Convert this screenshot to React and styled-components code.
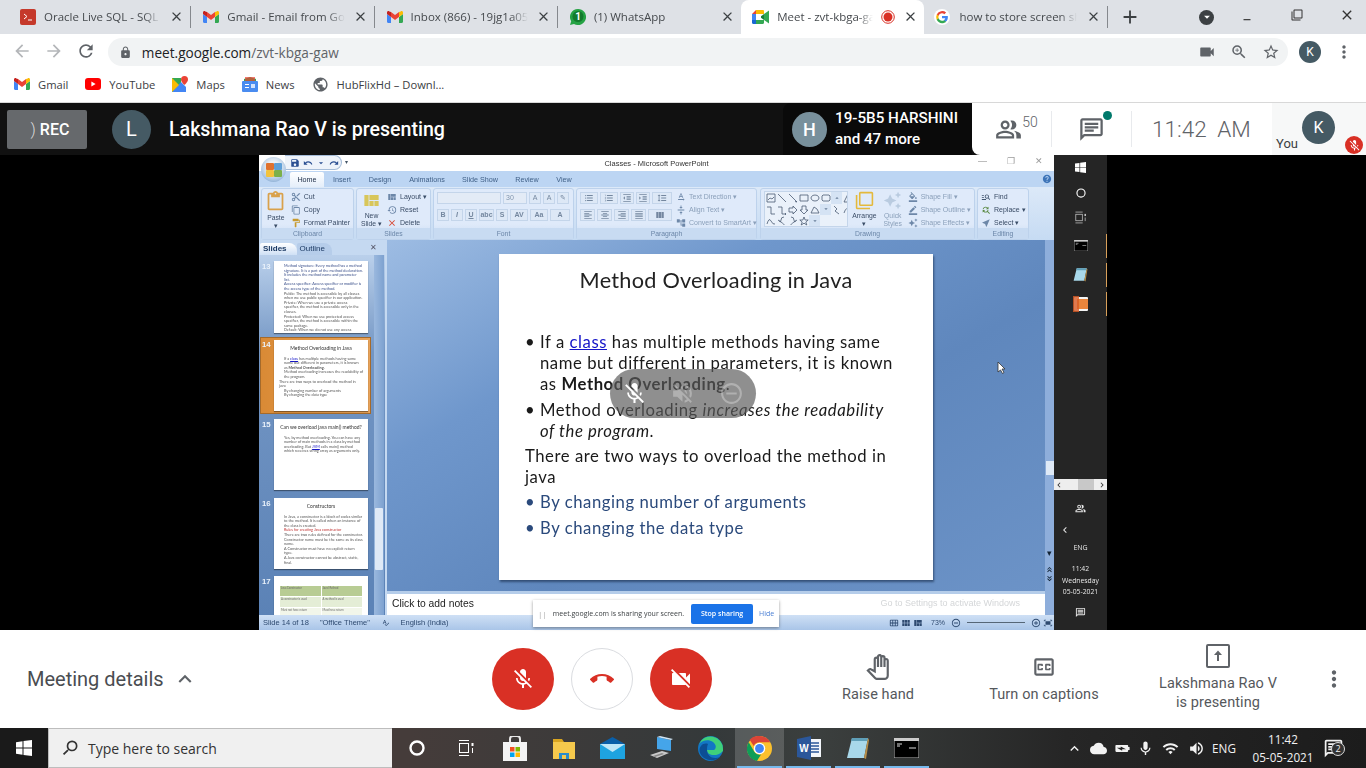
import React from 'react'
import styled, { createGlobalStyle } from 'styled-components'
import {
  MdArrowBack, MdArrowForward, MdRefresh, MdLock, MdVideocam, MdZoomIn, MdStarBorder, MdMoreVert,
  MdClose, MdAdd, MdExpandLess, MdMicOff, MdVideocamOff, MdCallEnd, MdOutlinePanTool,
  MdOutlineClosedCaption, MdOutlinePeopleAlt, MdOutlineChat, MdArrowDropDown, MdOutlineRemoveCircleOutline,
  MdVolumeOff, MdPublic, MdKeyboardArrowLeft, MdKeyboardArrowRight, MdKeyboardArrowUp, MdSearch,
  MdOutlineMessage, MdMic, MdOutlineWifi, MdVolumeUp, MdCloud, MdBatteryChargingFull, MdMinimize,
  MdFilterNone, MdContentCut, MdContentCopy, MdFormatPaint, MdContentPaste, MdViewQuilt, MdRestore,
  MdFormatListBulleted, MdFormatListNumbered, MdFormatIndentDecrease, MdFormatIndentIncrease,
  MdFormatLineSpacing, MdFormatAlignLeft, MdFormatAlignCenter, MdFormatAlignRight, MdFormatAlignJustify,
  MdViewColumn, MdTextRotationNone, MdVerticalAlignCenter, MdAccountTree, MdFormatColorFill, MdBorderColor,
  MdAutoAwesome, MdFindReplace, MdNearMe, MdHelp, MdSpellcheck, MdViewModule, MdCalendarViewMonth,
  MdFitScreen, MdAddCircleOutline, MdRemoveCircleOutline, MdKeyboardDoubleArrowUp, MdKeyboardDoubleArrowDown,
  MdArrowDropUp, MdSave, MdUndo, MdRedo, MdManageSearch,
} from 'react-icons/md'

const GlobalStyle = createGlobalStyle`
  html, body { margin: 0; padding: 0; background: #000; }
  * { box-sizing: border-box; }
  body { font-family: "Open Sans", sans-serif; }
`

const Page = styled.div`
  width: 1366px;
  height: 768px;
  overflow: hidden;
  display: flex;
  flex-direction: column;
  position: relative;
`

/* BROWSER CHROME */
const TabStrip = styled.div`
  height: 34px;
  background: #dee1e6;
  display: flex;
  align-items: stretch;
  padding-left: 8px;
  flex-shrink: 0;
`

const Tab = styled.div`
  width: 183.3px;
  display: flex;
  align-items: center;
  padding: 0 6px 1px ${(p) => p.$left || 12}px;
  gap: ${(p) => p.$gap || 8}px;
  position: relative;
  color: #45494d;
  font-size: 11.5px;
  background: ${(p) => (p.$active ? '#fff' : 'transparent')};
  border-radius: 8px 8px 0 0;
  border-right: ${(p) => (p.$divider ? '1px solid #9da0a5' : '0')};
  background-clip: padding-box;
  ${(p) => p.$divider && 'border-image: linear-gradient(#dee1e6 7px, #85888d 7px, #85888d 27px, #dee1e6 27px) 1;'}
`

const TabTitle = styled.span`
  flex: 1;
  overflow: hidden;
  white-space: nowrap;
  -webkit-mask-image: linear-gradient(90deg, #000 85%, transparent);
  mask-image: linear-gradient(90deg, #000 85%, transparent);
`

const TabClose = styled(MdClose)`
  font-size: 15px;
  color: #3c4043;
  flex-shrink: 0;
`

const NewTab = styled(MdAdd)`
  font-size: 22px;
  color: #3c4043;
  align-self: center;
  margin-left: 11px;
`

const WindowControls = styled.div`
  margin-left: auto;
  margin-right: -6px;
  display: flex;
  align-items: center;
  color: #333;
`

const ProfileDrop = styled.span`
  width: 15px;
  height: 15px;
  margin-right: 8px;
  border-radius: 50%;
  background: #3c4043;
  color: #fff;
  display: flex;
  align-items: center;
  justify-content: center;
  font-size: 14px;
`

const WindowButton = styled.span`
  width: 50px;
  height: 34px;
  display: flex;
  align-items: center;
  justify-content: center;
  font-size: ${(p) => p.$size || 14}px;
  margin-top: -5px;
`

const Toolbar = styled.div`
  height: 33px;
  background: #fff;
  display: flex;
  align-items: center;
  padding: 0 12px;
  flex-shrink: 0;
`

const NavIcon = styled.span`
  width: 32px;
  font-size: 20px;
  display: flex;
  justify-content: flex-start;
  color: ${(p) => (p.$off ? '#b4b6b9' : '#5f6368')};
`

const Omnibox = styled.div`
  width: 1182px;
  height: 28px;
  border-radius: 14px;
  background: #f1f3f4;
  display: flex;
  align-items: center;
  padding: 0 8px 0 11px;
  font-size: 13.6px;
  color: #202124;
  margin-top: 3px;
`

const LockIcon = styled(MdLock)`
  font-size: 13px;
  color: #5f6368;
  margin-right: 10px;
`

const UrlPath = styled.span`
  color: #5f6368;
`

const OmniIcons = styled.div`
  margin-left: auto;
  display: flex;
  gap: 14px;
  font-size: 18px;
  color: #5f6368;
`

const Avatar = styled.span`
  width: ${(p) => p.$size}px;
  height: ${(p) => p.$size}px;
  border-radius: 50%;
  background: ${(p) => p.$bg || '#455a64'};
  color: ${(p) => p.$color || '#fff'};
  font-size: ${(p) => p.$font}px;
  font-family: Roboto, sans-serif;
  display: flex;
  align-items: center;
  justify-content: center;
  flex-shrink: 0;
`

const ToolbarEnd = styled.div`
  display: flex;
  align-items: center;
  margin-left: 11px;
  gap: 13px;
  margin-top: 3px;
  color: #5f6368;
  font-size: 20px;
`

const Bookmarks = styled.div`
  height: 36px;
  background: #fff;
  border-bottom: 1px solid #d8d8d8;
  display: flex;
  align-items: center;
  padding: 0 0 1px 14px;
  font-size: 11.2px;
  color: #3c4043;
  flex-shrink: 0;
`

const Bookmark = styled.span`
  display: flex;
  align-items: center;
  gap: 8px;
  margin-right: 17px;
`

/* MEET TOP BAR */
const MeetBar = styled.div`
  height: 52px;
  background: #111;
  display: flex;
  align-items: center;
  font-family: Roboto, sans-serif;
  flex-shrink: 0;
  color: #fff;
`

const RecBadge = styled.div`
  width: 80px;
  height: 39px;
  margin-left: 7px;
  margin-right: 25px;
  border-radius: 2px;
  background: #66696c;
  display: flex;
  align-items: center;
  justify-content: center;
  gap: 4px;
  font-size: 16px;
  font-weight: 500;
  padding-left: 6px;
`

const RecMark = styled.span`
  font-weight: 300;
  color: #ddd;
`

const Presenter = styled.div`
  font-size: 19.6px;
  font-weight: 500;
  margin-left: 18px;
`

const Others = styled.div`
  margin-left: auto;
  width: 189px;
  height: 52px;
  border-radius: 8px 0 0 0;
  background: #0a0a0a;
  display: flex;
  align-items: center;
  gap: 8px;
  padding-left: 9px;
  font-size: 15.2px;
  font-weight: 500;
  line-height: 21px;
  white-space: nowrap;
`

const MeetInfo = styled.div`
  width: 394px;
  height: 52px;
  background: #fff;
  border-radius: 0 0 0 8px;
  display: flex;
  align-items: center;
  color: #5f6368;
`

const InfoIcon = styled.div`
  position: relative;
  height: 36px;
  display: flex;
  align-items: center;
  justify-content: center;
  width: ${(p) => p.$w}px;
  padding-left: ${(p) => p.$pl || 0}px;
  border-right: 1px solid #e8eaed;
  font-size: 27px;
`

const PeopleCount = styled.span`
  font-size: 14px;
  font-weight: 300;
  margin: -14px 0 0 0;
  color: #5f6368;
`

const ChatDot = styled.span`
  position: absolute;
  top: 0;
  right: 19px;
  width: 9px;
  height: 9px;
  border-radius: 50%;
  background: #00796b;
`

const Clock = styled.div`
  margin-left: 20px;
  width: 120px;
  font-size: 22.5px;
  font-weight: 300;
  word-spacing: 5px;
  color: #5f6368;
  white-space: nowrap;
`

const YouPanel = styled.div`
  flex: 1;
  height: 52px;
  background: #f7f8f8;
  position: relative;
  display: flex;
  align-items: center;
  padding-left: 30px;
  padding-bottom: 3px;
`

const YouLabel = styled.span`
  position: absolute;
  left: 4px;
  bottom: 4px;
  font-size: 13px;
  color: #3c4043;
`

const MutedBadge = styled.span`
  position: absolute;
  right: 3px;
  bottom: 1px;
  width: 18px;
  height: 18px;
  border-radius: 50%;
  background: #d93025;
  color: #fff;
  display: flex;
  align-items: center;
  justify-content: center;
  font-size: 13px;
`

/* SHARED SCREEN */
const Stage = styled.div`
  height: 475px;
  background: #000;
  display: flex;
  padding-left: 259px;
  flex-shrink: 0;
  position: relative;
`

const Ppt = styled.div`
  width: 795px;
  height: 475px;
  background: #c3d9f1;
  display: flex;
  flex-direction: column;
  font-family: "Liberation Sans", sans-serif;
  color: #36475f;
  filter: blur(0.4px);
`

const PptTitle = styled.div`
  height: 16px;
  background: #fff;
  display: flex;
  align-items: center;
  font-size: 7.5px;
  color: #333;
  position: relative;
  justify-content: center;
`

const Orb = styled.div`
  position: absolute;
  left: 2px;
  top: 2px;
  width: 25px;
  height: 25px;
  border-radius: 50%;
  background: radial-gradient(circle at 50% 40%, #eef2f6 30%, #a3c0e0 70%, #6288b4);
  display: grid;
  grid-template-columns: 8px 8px;
  grid-template-rows: 7px 7px;
  align-content: center;
  justify-content: center;
  z-index: 2;
`

const OrbCell = styled.span`
  background: ${(p) => p.$c};
  border-radius: 1px;
`

const Quick = styled.div`
  position: absolute;
  left: 26px;
  top: 0;
  height: 15px;
  width: 57px;
  border: 1px solid #a5bcd8;
  border-left: 0;
  border-radius: 0 8px 8px 0;
  background: #eef3fa;
  display: flex;
  align-items: center;
  gap: 3px;
  padding-left: 5px;
  font-size: 10px;
  color: #2a4f92;
`

const QuickMore = styled.span`
  position: absolute;
  left: 86px;
  top: 3px;
  font-size: 6px;
  color: #456;
`

const TitleControls = styled.div`
  position: absolute;
  right: 11px;
  top: 1px;
  display: flex;
  gap: 20px;
  font-size: 9px;
  color: #9a9a9a;
`

const PptTabs = styled.div`
  height: 16px;
  background: #bcd5f3;
  display: flex;
  align-items: flex-end;
  font-size: 7.2px;
  color: #3f5f86;
  padding-left: 31px;
  position: relative;
`

const HelpBadge = styled(MdHelp)`
  position: absolute;
  right: 2px;
  top: 3px;
  font-size: 10px;
  color: #3d74b8;
`

const PptTab = styled.span`
  height: 15px;
  display: flex;
  align-items: center;
  justify-content: center;
  width: ${(p) => p.$w}px;
  background: ${(p) => (p.$active ? 'linear-gradient(#fff, #e4eefa)' : 'transparent')};
  border-radius: 2px 2px 0 0;
  color: ${(p) => (p.$active ? '#20304a' : '#3f5f86')};
`

const Ribbon = styled.div`
  height: 53px;
  background: linear-gradient(#dce9f8, #c6dbf3);
  display: flex;
  padding: 1px 2px 0;
  gap: 2px;
`

const RibbonGroup = styled.div`
  width: ${(p) => p.$w}px;
  margin-left: ${(p) => p.$ml || 0}px;
  border: 1px solid #bdd2ec;
  border-radius: 3px;
  background: linear-gradient(#dfeafa 70%, #c8dbf3);
  display: flex;
  flex-direction: column;
  font-size: 7px;
  color: ${(p) => (p.$off ? '#8ba0ba' : '#3a4c66')};
`

const GroupBody = styled.div`
  flex: 1;
  display: flex;
  padding: 2px 3px 0;
  gap: ${(p) => p.$gap || 4}px;
  min-height: 0;
`

const GroupLabel = styled.div`
  height: 11px;
  font-size: 6.8px;
  color: #6b86a8;
  text-align: center;
  background: #c8dbf2;
  line-height: 12px;
`

const BigTool = styled.div`
  width: ${(p) => p.$w || 28}px;
  display: flex;
  flex-direction: column;
  align-items: center;
  text-align: center;
  line-height: 8px;
  gap: 2px;
  font-size: 6.8px;
  color: ${(p) => (p.$off ? '#8ba0ba' : 'inherit')};
`

const BigGlyph = styled.span`
  display: flex;
  font-size: ${(p) => p.$size || 20}px;
  color: ${(p) => p.$c};
  height: ${(p) => p.$size || 20}px;
`

const ToolStack = styled.div`
  display: flex;
  flex-direction: column;
  justify-content: space-between;
  height: 38px;
  white-space: nowrap;
  padding-bottom: 1px;
  color: ${(p) => (p.$off ? '#8ba0ba' : 'inherit')};
`

const ToolLine = styled.span`
  display: flex;
  align-items: center;
  gap: 3px;
  height: 11px;
`

const ToolGlyph = styled.span`
  display: flex;
  font-size: 10px;
  width: 10px;
  color: ${(p) => p.$c || '#6d87a8'};
`

const FontRow = styled.div`
  display: flex;
  align-items: center;
  gap: 2px;
  height: 13px;
  margin-bottom: 4px;
  font-size: 7px;
  color: #8195ae;
  font-weight: ${(p) => (p.$bold ? 700 : 400)};
`

const FontField = styled.span`
  width: ${(p) => p.$w}px;
  height: 12px;
  background: #e3ebf6;
  border: 1px solid #c4d5ea;
  font-size: 7px;
  padding-left: 2px;
  line-height: 10px;
  color: #8195ae;
`

const SmallBtn = styled.span`
  width: ${(p) => p.$w || 12}px;
  height: 12px;
  border: 1px solid #c4d5ea;
  display: flex;
  align-items: center;
  justify-content: center;
  font-size: ${(p) => p.$font || 7}px;
  color: #74879f;
  background: #dde8f6;
`

const Column = styled.div`
  display: flex;
  flex-direction: column;
  width: ${(p) => p.$w}px;
  flex-shrink: 0;
`

const ShapeGrid = styled.div`
  width: 84px;
  height: 36px;
  display: grid;
  grid-template-columns: repeat(7, 11px) 7px;
  grid-auto-rows: 11.6px;
  background: #eaf1fa;
  border: 1px solid #c4d5ea;
  overflow: hidden;
  flex-shrink: 0;
`

const ShapeSvg = styled.svg`
  width: 10px;
  height: 10px;
  margin: 1px 0 0 1px;
  fill: none;
  stroke: #4a5b72;
  stroke-width: 0.8;
`

const ShapeScroll = styled.span`
  display: flex;
  font-size: 8px;
  justify-content: center;
  align-items: center;
  background: #d5e3f4;
  color: #667c98;
`

const PptBody = styled.div`
  flex: 1;
  display: flex;
  min-height: 0;
`

const SlidesPane = styled.div`
  width: 126px;
  background: linear-gradient(#c5d9f1, #7396c4 30%, #5b82b6);
  display: flex;
  flex-direction: column;
  position: relative;
  overflow: hidden;
`

const PaneTabs = styled.div`
  height: 15px;
  padding: 3px 0 0 1px;
  display: flex;
  align-items: flex-end;
  font-size: 8px;
  color: #1c3a63;
  flex-shrink: 0;
  background: #c5d9f1;
  position: relative;
`

const PaneTab = styled.span`
  height: 12px;
  padding: 0 ${(p) => (p.$active ? '10px' : '7px')} 0 3px;
  line-height: 12px;
  font-weight: ${(p) => (p.$active ? 700 : 400)};
  background: ${(p) => (p.$active ? 'linear-gradient(#fff, #cfe0f5)' : '#b6cdea')};
  border-radius: 2px 8px 0 0;
`

const PaneClose = styled.span`
  position: absolute;
  right: 8px;
  top: 3px;
  font-size: 8px;
  color: #556;
`

const PaneBody = styled.div`
  flex: 1;
  display: flex;
  min-height: 0;
`

const ThumbList = styled.div`
  width: 113px;
  display: flex;
  flex-direction: column;
  padding-top: 6px;
  min-height: 0;
`

const ThumbRow = styled.div`
  height: ${(p) => p.$h}px;
  flex-shrink: 0;
  margin-top: ${(p) => p.$gap || 0}px;
  margin-left: 2px;
  width: 109px;
  padding: ${(p) => (p.$sel ? '2px 2px 2px 13px' : '0 2px 0 13px')};
  display: flex;
  background: ${(p) => (p.$sel ? 'linear-gradient(90deg, #d98a35, #e8a35a)' : 'transparent')};
  outline: ${(p) => (p.$sel ? '1px solid #a56a2a' : 'none')};
  position: relative;
`

const ThumbNum = styled.span`
  position: absolute;
  left: 1px;
  top: ${(p) => (p.$sel ? 2 : 1)}px;
  font-size: 7.8px;
  font-weight: 700;
  color: #e9f1fa;
`

const ThumbCard = styled.div`
  width: 94px;
  background: #fff;
  padding: 3px 5px;
  font-family: Lato, sans-serif;
  font-size: 3.8px;
  line-height: 4.6px;
  color: #555;
  overflow: hidden;
  box-shadow: 0 1px 1px rgba(0, 0, 0, 0.4);
  flex-shrink: 0;
  height: ${(p) => p.$h}px;
`

const ThumbHead = styled.div`
  text-align: center;
  font-size: 5px;
  color: #333;
  margin: 3px 0 6px;
`

const ThumbLine = styled.div`
  padding-left: 5px;
  color: ${(p) => p.$c || '#555'};
`

const ThumbTable = styled.div`
  display: grid;
  grid-template-columns: 1fr 1fr;
  gap: 1px;
  margin: 7px 1px 0;
  font-size: 2.8px;
  line-height: 4px;
`

const ThumbCell = styled.div`
  min-height: 10px;
  background: ${(p) => p.$c};
  color: #666;
  padding: 0 1px;
`

const PaneRail = styled.div`
  width: 10px;
  margin-left: 2px;
  background: linear-gradient(90deg, #9ab8de, #7ea2d0);
  flex-shrink: 0;
  position: relative;
`

const RailThumb = styled.span`
  position: absolute;
  top: 253px;
  left: 1px;
  width: 8px;
  height: 62px;
  background: #dfe9f6;
  border-radius: 1px;
`

const MainArea = styled.div`
  flex: 1;
  display: flex;
  flex-direction: column;
  min-width: 0;
  border-left: 2px solid #c5d9f1;
`

const SlideArea = styled.div`
  flex: 1;
  display: flex;
  justify-content: center;
  padding-top: 14px;
  background: linear-gradient(150deg, #9dbce3 0%, #6f97cc 30%, #5f87bd 60%, #6c93c7 100%);
`

const Slide = styled.div`
  width: 434px;
  height: 326px;
  background: #fff;
  box-shadow: 1px 2px 2px rgba(20, 40, 70, 0.6);
  font-family: Lato, sans-serif;
  color: #1a1a1a;
  padding: 0 32px 0 26px;
  font-size: 16.7px;
  line-height: 21.2px;
  letter-spacing: 0.55px;
`

const SlideTitle = styled.h1`
  margin: 12px -6px 38px 0;
  font-size: 21.7px;
  line-height: 28px;
  font-weight: 400;
  text-align: center;
  letter-spacing: 0.25px;
  color: #222;
`

const Bullet = styled.div`
  display: flex;
  margin-bottom: 4px;
  color: ${(p) => p.$c || 'inherit'};
`

const Dot = styled.span`
  width: 15px;
  flex-shrink: 0;
`

const Para = styled.div`
  margin-bottom: 4px;
`

const SlideLink = styled.span`
  color: #1414c8;
  text-decoration: underline;
`

const Notes = styled.div`
  height: 24px;
  background: #fff;
  border-top: 3px solid #b5cdea;
  font-size: 10.3px;
  line-height: 19px;
  color: #222;
  padding: 0 25px 0 5px;
  display: flex;
  justify-content: space-between;
`

const Ghost = styled.span`
  color: #d4d6d8;
  font-size: 9px;
`

const VScroll = styled.div`
  width: 9px;
  background: #8eaedb;
  display: flex;
  flex-direction: column;
  justify-content: flex-end;
  align-items: center;
  font-size: 9px;
  color: #123;
  padding-bottom: 32px;
  position: relative;
`

const ScrollThumb = styled.span`
  position: absolute;
  width: 8px;
  height: 14px;
  top: 221px;
  background: #dfeaf7;
`

const ScrollGlyph = styled.span`
  display: flex;
  margin-bottom: ${(p) => p.$mb || 0}px;
`

const PptStatus = styled.div`
  height: 15px;
  background: linear-gradient(#cfe0f5, #a9c5e8);
  display: flex;
  align-items: center;
  font-size: 7.5px;
  color: #2e4a70;
  padding-left: 4px;
`

const StatusText = styled.span`
  margin-right: ${(p) => p.$mr}px;
  display: flex;
  align-items: center;
`

const StatusEnd = styled.div`
  margin-left: auto;
  display: flex;
  align-items: center;
  gap: 2px;
  padding-right: 1px;
  font-size: 10px;
`

const StatusZoom = styled.span`
  font-size: 7px;
  margin: 0 4px 0 6px;
`

const ZoomTrack = styled.span`
  width: 58px;
  height: 1px;
  background: #567;
  display: block;
  margin: 0 4px;
`

const ShareBar = styled.div`
  position: absolute;
  left: 533px;
  top: 445px;
  width: 246px;
  height: 27px;
  background: #fff;
  box-shadow: 0 1px 3px rgba(0, 0, 0, 0.4);
  display: flex;
  align-items: center;
  padding-left: 5px;
  font-family: "Open Sans", sans-serif;
  font-size: 7px;
  white-space: nowrap;
  color: #3c4043;
  z-index: 4;
  filter: blur(0.25px);
`

const ShareGrip = styled.span`
  color: #aaa;
  margin-right: 6px;
  font-size: 8px;
`

const StopButton = styled.span`
  width: 62px;
  height: 20px;
  margin-left: 7px;
  border-radius: 2px;
  background: #1a73e8;
  color: #fff;
  font-weight: 600;
  display: flex;
  align-items: center;
  justify-content: center;
`

const HideLink = styled.span`
  margin-left: 6px;
  color: #4a7fd4;
`

const Pill = styled.div`
  position: absolute;
  left: 610px;
  top: 214px;
  width: 146px;
  height: 49px;
  border-radius: 25px;
  background: rgba(90, 90, 90, 0.68);
  display: flex;
  align-items: center;
  justify-content: space-around;
  font-size: 25px;
  z-index: 3;
`

const PillIcon = styled.span`
  display: flex;
  color: ${(p) => (p.$dim ? 'rgba(255,255,255,0.3)' : '#fff')};
`

const Pointer = styled.svg`
  position: absolute;
  left: 997px;
  top: 206px;
  z-index: 3;
`

const Sidebar = styled.div`
  width: 53px;
  background: #252525;
  display: flex;
  flex-direction: column;
  align-items: center;
  color: #e8e8e8;
  font-family: "Open Sans", sans-serif;
  font-size: 7px;
  position: relative;
  filter: blur(0.3px);
`

const SideIcon = styled.div`
  height: 25px;
  display: flex;
  align-items: center;
  justify-content: center;
  flex-shrink: 0;
  margin-top: ${(p) => p.$mt || 0}px;
  margin-bottom: ${(p) => p.$mb || 0}px;
`

const OpenTick = styled.span`
  position: absolute;
  right: 0;
  top: ${(p) => p.$top}px;
  width: 1px;
  height: 24px;
  background: #d9a05a;
`

const SideScroll = styled.div`
  margin-top: 163px;
  width: 53px;
  height: 11px;
  background: #eee;
  display: flex;
  justify-content: space-between;
  align-items: center;
  color: #333;
  font-size: 10px;
  flex-shrink: 0;
`

const SideScrollThumb = styled.span`
  width: 16px;
  height: 11px;
  background: #c8c8c8;
  margin-left: 11px;
`

const SideBack = styled.div`
  align-self: flex-start;
  margin: 3px 0 3px 5px;
  font-size: 12px;
  display: flex;
`

const SideEng = styled.div`
  margin-top: 4px;
`

const SideClock = styled.div`
  text-align: center;
  line-height: 11.5px;
  font-size: 6.8px;
  margin-top: 11px;
`

/* MEET FOOTER */
const Footer = styled.div`
  height: 98px;
  background: #fff;
  display: flex;
  align-items: center;
  font-family: Roboto, sans-serif;
  color: #3c4043;
  flex-shrink: 0;
  position: relative;
`

const Details = styled.div`
  width: 492px;
  padding-left: 27px;
  display: flex;
  align-items: center;
  gap: 8px;
  font-size: 20px;
  color: #4a4d51;
`

const CallButtons = styled.div`
  display: flex;
  gap: 17px;
  padding-bottom: 1px;
`

const CallButton = styled.span`
  width: 62px;
  height: 62px;
  border-radius: 50%;
  background: ${(p) => (p.$light ? '#fff' : '#d93025')};
  border: ${(p) => (p.$light ? '1px solid #dadce0' : '0')};
  color: ${(p) => (p.$light ? '#d93025' : '#fff')};
  font-size: 24px;
  display: flex;
  align-items: center;
  justify-content: center;
`

const FooterAction = styled.div`
  width: ${(p) => p.$w}px;
  margin-left: ${(p) => p.$ml}px;
  display: flex;
  flex-direction: column;
  align-items: center;
  font-size: 14.5px;
  line-height: 19px;
  text-align: center;
  color: #55585c;
  letter-spacing: 0.1px;
  padding-bottom: ${(p) => p.$pb || 0}px;
  white-space: nowrap;
`

const FooterGlyph = styled.span`
  font-size: 26px;
  height: 30px;
  margin: -3px 0 3px;
  display: flex;
  align-items: center;
  color: #5f6368;
`

const FooterMore = styled.span`
  font-size: 26px;
  display: flex;
  color: #5f6368;
  margin-left: 38px;
`

/* WINDOWS TASKBAR */
const Taskbar = styled.div`
  height: 40px;
  background: linear-gradient(90deg, #453c3a 30%, #34393a 52%, #3b3f3e 60%, #262626 78%, #1c1c1c);
  display: flex;
  align-items: stretch;
  color: #fff;
  flex-shrink: 0;
  font-family: "Open Sans", sans-serif;
`

const StartButton = styled.div`
  width: 48px;
  background: #1a1a1a;
  display: flex;
  align-items: center;
  justify-content: center;
`

const SearchBox = styled.div`
  width: 344px;
  background: #f0f0f0;
  border: 1px solid #bdbdbd;
  border-width: 1px 0 1px 1px;
  display: flex;
  align-items: center;
  gap: 8px;
  padding-left: 11px;
  color: #333;
  font-size: 14px;
`

const SearchGlyph = styled(MdSearch)`
  font-size: 20px;
  transform: scaleX(-1);
`

const TaskIcon = styled.div`
  width: 49px;
  display: flex;
  align-items: center;
  justify-content: center;
  position: relative;
  background: ${(p) => (p.$active ? 'rgba(255, 255, 255, 0.17)' : 'transparent')};
  &::after {
    content: '';
    position: absolute;
    left: 2px;
    right: 2px;
    bottom: 0;
    height: 2px;
    background: ${(p) => (p.$open ? '#76b9ed' : 'transparent')};
  }
`

const Tray = styled.div`
  margin-left: auto;
  display: flex;
  align-items: center;
  font-size: 17px;
  color: #f2f2f2;
`

const TraySlot = styled.span`
  display: flex;
  width: ${(p) => p.$w || 24}px;
  justify-content: center;
  font-size: ${(p) => p.$font || 17}px;
`

const BatteryGlyph = styled(MdBatteryChargingFull)`
  transform: rotate(90deg);
`

const TrayClock = styled.div`
  width: 70px;
  text-align: center;
  font-size: 11.7px;
  line-height: 18px;
  margin-left: 8px;
`

const NotifySlot = styled.div`
  width: 48px;
  padding-right: 18px;
  display: flex;
  align-items: center;
  justify-content: center;
  position: relative;
  font-size: 21px;
`

const NotifyCount = styled.span`
  position: absolute;
  right: 21px;
  bottom: 3px;
  width: 14px;
  height: 14px;
  border-radius: 50%;
  background: #333;
  border: 1px solid #ddd;
  font-size: 9px;
  line-height: 12px;
  text-align: center;
`

/* ICONS */
const GmailIcon = () => (
  <svg width="16" height="12" viewBox="0 0 16 12">
    <path d="M1 12V2l7 5 7-5v10h-3V6L8 9 4 6v6z" fill="#fff" />
    <path d="M0 3v7.800C0 11.500.5 12 1.200 12H4V6z" fill="#4285f4" />
    <path d="M12 12h2.800c.7 0 1.200-.5 1.200-1.200V3l-4 3z" fill="#34a853" />
    <path d="M12 1v5l4-3V1.600C16 .3 14.600-.3 13.700.4z" fill="#fbbc04" />
    <path d="M4 6V1l4 3 4-3v5L8 9z" fill="#ea4335" />
    <path d="M0 1.600V3l4 3V1L2.300.4C1.400-.3 0 .3 0 1.600z" fill="#c5221f" />
  </svg>
)

const OracleIcon = () => (
  <svg width="16" height="16" viewBox="0 0 16 16">
    <rect width="16" height="16" rx="2" fill="#c5392b" />
    <path d="M4 5l3 2.500L4 10" fill="none" stroke="#fff" />
    <path d="M8 11h4" stroke="#fff" />
  </svg>
)

const WhatsAppIcon = () => (
  <svg width="16" height="16" viewBox="0 0 16 16">
    <path d="M8 0a8 8 0 0 0-6.800 12.200L0 16l4-1.100A8 8 0 1 0 8 0z" fill="#25a244" />
    <circle cx="8" cy="7.500" r="5.500" fill="#137a2d" />
    <text x="8" y="11" textAnchor="middle" fontSize="10" fontWeight="700" fill="#fff" fontFamily="Roboto">1</text>
  </svg>
)

const MeetIcon = () => (
  <svg width="17" height="14" viewBox="0 0 17 14">
    <path d="M0 4l4-4v4z" fill="#ea4335" />
    <path d="M0 4h4v6H0z" fill="#4285f4" />
    <path d="M0 10h4v4H1.200C.5 14 0 13.500 0 12.800z" fill="#1967d2" />
    <path d="M4 0h6.800c.7 0 1.200.5 1.200 1.200V4H4z" fill="#fbbc04" />
    <path d="M4 10h8v2.800c0 .7-.5 1.200-1.200 1.200H4z" fill="#34a853" />
    <path d="M8 7l4-3v6z" fill="#188038" />
    <path d="M12 4l5-3.500v13L12 10z" fill="#34a853" />
    <rect x="4" y="4" width="5" height="6" fill="#fff" />
  </svg>
)

const GoogleIcon = () => (
  <svg width="16" height="16" viewBox="0 0 18 18">
    <circle cx="9" cy="9" r="9" fill="#fff" />
    <path d="M15.600 9.200c0-.5 0-.9-.1-1.300H9v2.500h3.700a3.200 3.200 0 0 1-1.400 2.100v1.700h2.300c1.300-1.200 2-3 2-5z" fill="#4285f4" />
    <path d="M9 16c1.900 0 3.400-.6 4.600-1.700l-2.300-1.700c-.6.400-1.400.7-2.300.7-1.800 0-3.300-1.200-3.800-2.800H3.200v1.800A7 7 0 0 0 9 16z" fill="#34a853" />
    <path d="M5.200 10.500a4.200 4.200 0 0 1 0-2.900V5.800H3.200a7 7 0 0 0 0 6.400z" fill="#fbbc05" />
    <path d="M9 4.800c1 0 1.900.4 2.600 1l2-2A7 7 0 0 0 3.200 5.800l2 1.800C5.700 6 7.200 4.800 9 4.800z" fill="#ea4335" />
  </svg>
)

const RecDot = () => (
  <svg width="14" height="14" viewBox="0 0 14 14">
    <circle cx="7" cy="7" r="6.300" fill="none" stroke="#d93025" />
    <circle cx="7" cy="7" r="4.500" fill="#d93025" />
  </svg>
)

const YouTubeIcon = () => (
  <svg width="16" height="12" viewBox="0 0 16 12">
    <rect width="16" height="12" rx="3" fill="#f00" />
    <path d="M6.400 3.400l4.200 2.600-4.200 2.600z" fill="#fff" />
  </svg>
)

const MapsIcon = () => (
  <svg width="16" height="16" viewBox="0 0 16 16">
    <path d="M0 2h9v14H0z" fill="#34a853" />
    <path d="M0 16L9 6l5 5v5z" fill="#4285f4" />
    <path d="M0 2l7 7-7 7z" fill="#fbbc04" />
    <path d="M12.500 0a3.500 3.500 0 0 0-3.500 3.500C9 6 12.500 9 12.500 9S16 6 16 3.500A3.500 3.500 0 0 0 12.500 0z" fill="#ea4335" />
  </svg>
)

const NewsIcon = () => (
  <svg width="16" height="15" viewBox="0 0 16 15">
    <path d="M2 2l6-2 6 2v3H2z" fill="#34a853" />
    <path d="M3 0h10v4H3z" fill="#ea4335" opacity="0.7" />
    <rect x="0" y="4" width="16" height="11" rx="1" fill="#4a8cf0" />
    <rect x="3" y="7" width="4" height="1" fill="#fff" />
    <rect x="3" y="10" width="4" height="1" fill="#fff" />
    <rect x="9" y="7" width="4" height="4" fill="#d3e3fd" />
  </svg>
)

const WindowsLogo = ({ size = 16, color = '#fff' }) => (
  <svg width={size} height={size} viewBox="0 0 16 16" fill={color}>
    <path d="M0 2.200L6.500 1.300v6.200H0zM7.500 1.100L16 0v7.500H7.500zM0 8.500h6.500v6.200L0 13.800zM7.500 8.500H16V16l-8.500-1.100z" />
  </svg>
)

const TaskViewIcon = ({ size = 18, color = '#fff' }) => (
  <svg width={size} height={size} viewBox="0 0 18 18" fill="none" stroke={color}>
    <path d="M2 1.500h10M2 16.500h10" />
    <rect x="2.500" y="4.500" width="9" height="9" />
    <rect x="14.500" y="4" width="2" height="3" fill={color} stroke="none" />
    <path d="M15.500 9v5" />
  </svg>
)

const CortanaRing = ({ size = 16, width = 2.4 }) => (
  <svg width={size} height={size} viewBox="0 0 16 16">
    <circle cx="8" cy="8" r="6.500" fill="none" stroke="#fff" strokeWidth={width} />
  </svg>
)

const StoreIcon = () => (
  <svg width="24" height="25" viewBox="0 0 24 25">
    <path d="M7 7V3a3 3 0 0 1 3-3h4a3 3 0 0 1 3 3v4" fill="none" stroke="#e8e8e8" strokeWidth="2" />
    <rect y="6" width="24" height="19" fill="#f4f4f4" />
    <rect x="7" y="11" width="4.500" height="4.500" fill="#f25022" />
    <rect x="12.500" y="11" width="4.500" height="4.500" fill="#7fba00" />
    <rect x="7" y="16.500" width="4.500" height="4.500" fill="#00a4ef" />
    <rect x="12.500" y="16.500" width="4.500" height="4.500" fill="#ffb900" />
  </svg>
)

const FolderIcon = () => (
  <svg width="22" height="22" viewBox="0 0 22 22">
    <path d="M0 2h9l2 3h11v17H0z" fill="#d9a520" />
    <rect y="5" width="22" height="17" fill="#f5c94c" />
    <path d="M6 22v-6h10v6z" fill="#2a8ccb" />
    <rect x="9" y="18" width="4" height="4" fill="#f5c94c" />
  </svg>
)

const MailIcon = () => (
  <svg width="25" height="22" viewBox="0 0 25 22">
    <path d="M0 7l12.500-7L25 7z" fill="#0a5fa8" />
    <rect y="7" width="25" height="15" fill="#1ea3e0" />
    <path d="M0 7l12.500 8L25 7z" fill="#bfe6f7" />
  </svg>
)

const PcIcon = () => (
  <svg width="24" height="24" viewBox="0 0 24 24">
    <path d="M7 1l14 3v11L7 13z" fill="#45a5ea" />
    <path d="M7 1l3-1 13 3-2 1z" fill="#cfe6f7" />
    <path d="M0 19l12-4 7 2-12 5z" fill="#c9c9c9" />
    <path d="M3 20l9-3 2 1-9 3z" fill="#888" />
  </svg>
)

const EdgeIcon = () => (
  <svg width="25" height="25" viewBox="0 0 25 25">
    <circle cx="12.500" cy="12.500" r="12.500" fill="#1277c4" />
    <path d="M25 13A12.500 12.500 0 0 0 1 8c3-4 10-5 14-2s3 7 1 8H9c0 5 9 8 16 1z" fill="#3fd07a" />
    <path d="M9 14c0 6 6 10 13 7-7 6-17 3-20-4-2-6 3-11 8-9-1 2-1 4-1 6z" fill="#0c4e94" />
  </svg>
)

const ChromeIcon = () => (
  <svg width="25" height="25" viewBox="0 0 48 48">
    <circle cx="24" cy="24" r="24" fill="#fbc02d" />
    <path d="M24 0a24 24 0 0 1 20.800 12H24a12 12 0 0 0-11 7L5 7A24 24 0 0 1 24 0z" fill="#db4437" />
    <path d="M3.300 12L14 30a12 12 0 0 0 13 5.500L19 48A24 24 0 0 1 3.300 12z" fill="#0f9d58" />
    <circle cx="24" cy="24" r="11" fill="#fff" />
    <circle cx="24" cy="24" r="8.500" fill="#4285f4" />
  </svg>
)

const WordIcon = () => (
  <svg width="24" height="24" viewBox="0 0 24 24">
    <rect x="9" y="3" width="15" height="18" fill="#f3f6fb" />
    <path d="M13 7h9M13 10h9M13 13h9M13 16h9" stroke="#2b579a" strokeWidth="1.500" />
    <path d="M0 3l14-3v24L0 21z" fill="#2b579a" />
    <text x="7" y="16" textAnchor="middle" fontSize="10" fontWeight="700" fill="#fff" fontFamily="Liberation Sans">W</text>
  </svg>
)

const NotepadIcon = ({ size = 24 }) => (
  <svg width={size} height={size} viewBox="0 0 24 24">
    <path d="M6 2h16l-4 20H1z" fill="#a8d8ea" />
    <path d="M6 2h16l-.5 3H5z" fill="#5f9fb8" />
    <path d="M18 22l4-20 1 2-3 19z" fill="#b88f4a" />
  </svg>
)

const CmdIcon = ({ w = 25, h = 20 }) => (
  <svg width={w} height={h} viewBox="0 0 25 20">
    <rect width="25" height="20" fill="#000" stroke="#bbb" />
    <rect width="25" height="3" fill="#ccc" />
    <path d="M3 6h5M3 8h3M15 10h7" stroke="#ddd" />
  </svg>
)

const PptIcon = () => (
  <svg width="15" height="16" viewBox="0 0 15 16">
    <rect x="1" y="1" width="14" height="14" fill="#f4f4f4" rx="1" />
    <rect x="4" y="3" width="11" height="10" fill="#e9853c" />
    <rect x="0" y="0" width="6" height="16" fill="#d95b26" opacity="0.8" />
  </svg>
)

const PresentIcon = () => (
  <svg width="26" height="26" viewBox="0 0 26 26" fill="none" stroke="#5f6368" strokeWidth="2">
    <rect x="2" y="2" width="22" height="22" rx="1" />
    <path d="M13 18v-6" />
    <path d="M9 12l4-4.500 4 4.500z" fill="#5f6368" stroke="none" />
  </svg>
)

const ShapePaths = [
  'M1 1h8v8H1zM2 7l2-2 2 1 2-2', 'M1 1l8 8', 'M1 1l8 8M9 9l-2-.5', 'M1 2h8v6H1z', 'M5 2a4 3 0 1 0 .01 0', 'M2 2h6l1 1v4l-1 1H2L1 7V3z', null,
  'M5 1l4 8H1z', 'M1 2h4v7h4', 'M1 2h4v7h4M8 8l1 1-1 1', 'M1 3h4V1l4 4-4 4V7H1z', 'M3 1h4v4h2L5 9 1 5h2z', 'M1 8l3-6 3 2 2 4z', null,
  'M2 1l3 3-2 2 4 3', 'M1 8Q3 1 9 3', 'M1 8q2-7 4-3t4 3', 'M7 1Q4 1 4 4T2 5t2 1 3 3', 'M3 1q3 0 3 3t2 1-2 1-3 3', 'M5 1l1.200 3h3L6.800 6l1 3L5 7.200 2.200 9l1-3L.8 4h3z', null,
]

const ShapeIcon = ({ d }) => (
  <ShapeSvg viewBox="0 0 10 10"><path d={d} /></ShapeSvg>
)

const Thumb = ({ num, h, gap, sel, cardH, children }) => (
  <ThumbRow $h={h} $gap={gap} $sel={sel}>
    <ThumbNum $sel={sel}>{num}</ThumbNum>
    <ThumbCard $h={cardH}>{children}</ThumbCard>
  </ThumbRow>
)

export default function App() {
  return (
    <Page>
      <GlobalStyle />

      <TabStrip>
        <Tab $divider><OracleIcon /><TabTitle>Oracle Live SQL - SQL Worksheet</TabTitle><TabClose /></Tab>
        <Tab $divider><GmailIcon /><TabTitle>Gmail - Email from Google</TabTitle><TabClose /></Tab>
        <Tab $divider><GmailIcon /><TabTitle>Inbox (866) - 19jg1a05</TabTitle><TabClose /></Tab>
        <Tab><WhatsAppIcon /><TabTitle>(1) WhatsApp</TabTitle><TabClose /></Tab>
        <Tab $active $left={11}><MeetIcon /><TabTitle>Meet - zvt-kbga-gaw</TabTitle><RecDot /><TabClose /></Tab>
        <Tab $divider $left={10} $gap={9}><GoogleIcon /><TabTitle>how to store screen shots</TabTitle><TabClose /></Tab>
        <NewTab />
        <WindowControls>
          <ProfileDrop><MdArrowDropDown /></ProfileDrop>
          <WindowButton><MdMinimize /></WindowButton>
          <WindowButton $size={12}><MdFilterNone /></WindowButton>
          <WindowButton $size={16}><MdClose /></WindowButton>
        </WindowControls>
      </TabStrip>

      <Toolbar>
        <NavIcon $off><MdArrowBack /></NavIcon>
        <NavIcon $off><MdArrowForward /></NavIcon>
        <NavIcon><MdRefresh /></NavIcon>
        <Omnibox>
          <LockIcon />
          meet.google.com<UrlPath>/zvt-kbga-gaw</UrlPath>
          <OmniIcons><MdVideocam /><MdZoomIn /><MdStarBorder /></OmniIcons>
        </Omnibox>
        <ToolbarEnd>
          <Avatar $size={22} $font={12}>K</Avatar>
          <MdMoreVert />
        </ToolbarEnd>
      </Toolbar>

      <Bookmarks>
        <Bookmark><GmailIcon />Gmail</Bookmark>
        <Bookmark><YouTubeIcon />YouTube</Bookmark>
        <Bookmark><MapsIcon />Maps</Bookmark>
        <Bookmark><NewsIcon />News</Bookmark>
        <Bookmark><MdPublic size={17} color="#5f6368" />HubFlixHd – Downl...</Bookmark>
      </Bookmarks>

      <MeetBar>
        <RecBadge><RecMark>)</RecMark> REC</RecBadge>
        <Avatar $size={39} $font={20}>L</Avatar>
        <Presenter>Lakshmana Rao V is presenting</Presenter>
        <Others>
          <Avatar $size={35} $font={18} $bg="#78909c">H</Avatar>
          <div>19-5B5 HARSHINI<br />and 47 more</div>
        </Others>
        <MeetInfo>
          <InfoIcon $w={80} $pl={10}>
            <MdOutlinePeopleAlt />
            <PeopleCount>50</PeopleCount>
          </InfoIcon>
          <InfoIcon $w={80}>
            <MdOutlineChat />
            <ChatDot />
          </InfoIcon>
          <Clock>11:42 AM</Clock>
          <YouPanel>
            <Avatar $size={33} $font={16}>K</Avatar>
            <YouLabel>You</YouLabel>
            <MutedBadge><MdMicOff /></MutedBadge>
          </YouPanel>
        </MeetInfo>
      </MeetBar>

      <Stage>
        <Ppt>
          <PptTitle>
            <Orb>
              <OrbCell $c="#e0722f" /><OrbCell $c="#5fa0d8" /><OrbCell $c="#f2c33c" /><OrbCell $c="#7bb04a" />
            </Orb>
            <Quick><MdSave /><MdUndo /><MdArrowDropDown /><MdRedo /></Quick>
            <QuickMore>▾</QuickMore>
            Classes - Microsoft PowerPoint
            <TitleControls><span>—</span><span>❐</span><span>✕</span></TitleControls>
          </PptTitle>
          <PptTabs>
            <PptTab $w={34} $active>Home</PptTab>
            <PptTab $w={36}>Insert</PptTab>
            <PptTab $w={40}>Design</PptTab>
            <PptTab $w={54}>Animations</PptTab>
            <PptTab $w={52}>Slide Show</PptTab>
            <PptTab $w={42}>Review</PptTab>
            <PptTab $w={32}>View</PptTab>
            <HelpBadge />
          </PptTabs>
          <Ribbon>
            <RibbonGroup $w={93}>
              <GroupBody>
                <BigTool $w={23}><BigGlyph $size={21} $c="#d9a14c"><MdContentPaste /></BigGlyph>Paste<br />▾</BigTool>
                <ToolStack>
                  <ToolLine><ToolGlyph><MdContentCut /></ToolGlyph>Cut</ToolLine>
                  <ToolLine><ToolGlyph><MdContentCopy /></ToolGlyph>Copy</ToolLine>
                  <ToolLine><ToolGlyph $c="#c79a2e"><MdFormatPaint /></ToolGlyph>Format Painter</ToolLine>
                </ToolStack>
              </GroupBody>
              <GroupLabel>Clipboard</GroupLabel>
            </RibbonGroup>
            <RibbonGroup $w={75}>
              <GroupBody>
                <BigTool $w={26}><BigGlyph $size={19} $c="#d8c65a"><MdViewQuilt /></BigGlyph>New<br />Slide ▾</BigTool>
                <ToolStack>
                  <ToolLine><ToolGlyph><MdViewQuilt /></ToolGlyph>Layout ▾</ToolLine>
                  <ToolLine><ToolGlyph><MdRestore /></ToolGlyph>Reset</ToolLine>
                  <ToolLine><ToolGlyph $c="#d8452f"><MdClose /></ToolGlyph>Delete</ToolLine>
                </ToolStack>
              </GroupBody>
              <GroupLabel>Slides</GroupLabel>
            </RibbonGroup>
            <RibbonGroup $w={141} $off>
              <GroupBody>
                <Column>
                  <FontRow>
                    <FontField $w={64} />
                    <FontField $w={24}>30</FontField>
                    <SmallBtn>A</SmallBtn><SmallBtn>A</SmallBtn><SmallBtn>✎</SmallBtn>
                  </FontRow>
                  <FontRow $bold>
                    <SmallBtn>B</SmallBtn><SmallBtn><i>I</i></SmallBtn><SmallBtn><u>U</u></SmallBtn>
                    <SmallBtn $w={15}>abc</SmallBtn><SmallBtn>S</SmallBtn><SmallBtn $w={18}>AV</SmallBtn>
                    <SmallBtn $w={18}>Aa</SmallBtn><SmallBtn $w={20}>A</SmallBtn>
                  </FontRow>
                </Column>
              </GroupBody>
              <GroupLabel>Font</GroupLabel>
            </RibbonGroup>
            <RibbonGroup $w={181} $off>
              <GroupBody>
                <Column $w={92}>
                  <FontRow>
                    <SmallBtn $w={18} $font={10}><MdFormatListBulleted /></SmallBtn>
                    <SmallBtn $w={18} $font={10}><MdFormatListNumbered /></SmallBtn>
                    <SmallBtn $w={14} $font={10}><MdFormatIndentDecrease /></SmallBtn>
                    <SmallBtn $w={14} $font={10}><MdFormatIndentIncrease /></SmallBtn>
                    <SmallBtn $w={20} $font={10}><MdFormatLineSpacing /></SmallBtn>
                  </FontRow>
                  <FontRow>
                    <SmallBtn $w={15} $font={10}><MdFormatAlignLeft /></SmallBtn>
                    <SmallBtn $w={15} $font={10}><MdFormatAlignCenter /></SmallBtn>
                    <SmallBtn $w={15} $font={10}><MdFormatAlignRight /></SmallBtn>
                    <SmallBtn $w={15} $font={10}><MdFormatAlignJustify /></SmallBtn>
                    <SmallBtn $w={24} $font={10}><MdViewColumn /></SmallBtn>
                  </FontRow>
                </Column>
                <ToolStack>
                  <ToolLine><ToolGlyph><MdTextRotationNone /></ToolGlyph>Text Direction ▾</ToolLine>
                  <ToolLine><ToolGlyph><MdVerticalAlignCenter /></ToolGlyph>Align Text ▾</ToolLine>
                  <ToolLine><ToolGlyph><MdAccountTree /></ToolGlyph>Convert to SmartArt ▾</ToolLine>
                </ToolStack>
              </GroupBody>
              <GroupLabel>Paragraph</GroupLabel>
            </RibbonGroup>
            <RibbonGroup $w={215} $ml={1}>
              <GroupBody $gap={3}>
                <ShapeGrid>
                  {ShapePaths.map((d, i) =>
                    d ? <ShapeIcon key={i} d={d} /> : (
                      <ShapeScroll key={i}>{i === 6 ? <MdArrowDropUp /> : <MdArrowDropDown />}</ShapeScroll>
                    )
                  )}
                </ShapeGrid>
                <BigTool $w={27}><BigGlyph $size={19} $c="#e4b93c"><MdFilterNone /></BigGlyph>Arrange<br />▾</BigTool>
                <BigTool $w={24} $off><BigGlyph $size={19} $c="#b9cbe0"><MdAutoAwesome /></BigGlyph>Quick<br />Styles ▾</BigTool>
                <ToolStack $off>
                  <ToolLine><ToolGlyph><MdFormatColorFill /></ToolGlyph>Shape Fill ▾</ToolLine>
                  <ToolLine><ToolGlyph><MdBorderColor /></ToolGlyph>Shape Outline ▾</ToolLine>
                  <ToolLine><ToolGlyph><MdAutoAwesome /></ToolGlyph>Shape Effects ▾</ToolLine>
                </ToolStack>
              </GroupBody>
              <GroupLabel>Drawing</GroupLabel>
            </RibbonGroup>
            <RibbonGroup $w={52}>
              <GroupBody>
                <ToolStack>
                  <ToolLine><ToolGlyph $c="#40546e"><MdManageSearch /></ToolGlyph>Find</ToolLine>
                  <ToolLine><ToolGlyph $c="#5b8a44"><MdFindReplace /></ToolGlyph>Replace ▾</ToolLine>
                  <ToolLine><ToolGlyph><MdNearMe /></ToolGlyph>Select ▾</ToolLine>
                </ToolStack>
              </GroupBody>
              <GroupLabel>Editing</GroupLabel>
            </RibbonGroup>
          </Ribbon>

          <PptBody>
            <SlidesPane>
              <PaneTabs>
                <PaneTab $active>Slides</PaneTab>
                <PaneTab>Outline</PaneTab>
                <PaneClose>✕</PaneClose>
              </PaneTabs>
              <PaneBody>
                <ThumbList>
                  <Thumb num="13" h={72} cardH={72}>
                    <ThumbLine $c="#3a4f8a">Method signature: Every method has a method signature. It is a part of the method declaration. It includes the method name and parameter list.</ThumbLine>
                    <ThumbLine $c="#3a4f8a">Access specifier: Access specifier or modifier is the access type of the method.</ThumbLine>
                    <ThumbLine>Public: The method is accessible by all classes when we use public specifier in our application.</ThumbLine>
                    <ThumbLine>Private: When we use a private access specifier, the method is accessible only in the classes.</ThumbLine>
                    <ThumbLine>Protected: When we use protected access specifier, the method is accessible within the same package.</ThumbLine>
                    <ThumbLine>Default: When we do not use any access specifier in the method declaration.</ThumbLine>
                  </Thumb>
                  <Thumb num="14" h={75} gap={5} sel cardH={71}>
                    <ThumbHead>Method Overloading in Java</ThumbHead>
                    <ThumbLine>If a <SlideLink>class</SlideLink> has multiple methods having same name but different in parameters, it is known as <b>Method Overloading.</b></ThumbLine>
                    <ThumbLine>Method overloading increases the readability of the program.</ThumbLine>
                    There are two ways to overload the method in java
                    <ThumbLine>By changing number of arguments</ThumbLine>
                    <ThumbLine>By changing the data type</ThumbLine>
                  </Thumb>
                  <Thumb num="15" h={71} gap={6} cardH={71}>
                    <ThumbHead>Can we overload java main() method?</ThumbHead>
                    <ThumbLine>Yes, by method overloading. You can have any number of main methods in a class by method overloading. But <SlideLink>JVM</SlideLink> calls main() method which receives string array as arguments only.</ThumbLine>
                  </Thumb>
                  <Thumb num="16" h={71} gap={8} cardH={71}>
                    <ThumbHead>Constructors</ThumbHead>
                    <ThumbLine>In Java, a constructor is a block of codes similar to the method. It is called when an instance of the class is created.</ThumbLine>
                    <ThumbLine $c="#c03030">Rules for creating Java constructor</ThumbLine>
                    <ThumbLine>There are two rules defined for the constructor.</ThumbLine>
                    <ThumbLine>Constructor name must be the same as its class name.</ThumbLine>
                    <ThumbLine>A Constructor must have no explicit return type.</ThumbLine>
                    <ThumbLine>A Java constructor cannot be abstract, static, final.</ThumbLine>
                  </Thumb>
                  <Thumb num="17" h={40} gap={7} cardH={40}>
                    <ThumbTable>
                      <ThumbCell $c="#b8cc94">Java Constructor</ThumbCell><ThumbCell $c="#b8cc94">Java Method</ThumbCell>
                      <ThumbCell $c="#e4edd6">A constructor is used</ThumbCell><ThumbCell $c="#e4edd6">A method is used</ThumbCell>
                      <ThumbCell $c="#f2f6ea">Must not have return</ThumbCell><ThumbCell $c="#f2f6ea">Must have return</ThumbCell>
                    </ThumbTable>
                  </Thumb>
                </ThumbList>
                <PaneRail><RailThumb /></PaneRail>
              </PaneBody>
            </SlidesPane>

            <MainArea>
              <SlideArea>
                <Slide>
                  <SlideTitle>Method Overloading in Java</SlideTitle>
                  <Bullet>
                    <Dot>•</Dot>
                    <div>If a <SlideLink>class</SlideLink> has multiple methods having same name but different in parameters, it is known as <b>Method Overloading</b>.</div>
                  </Bullet>
                  <Bullet>
                    <Dot>•</Dot>
                    <div>Method overloading <i>increases the readability of the program</i>.</div>
                  </Bullet>
                  <Para>There are two ways to overload the method in java</Para>
                  <Bullet $c="#2b4a7c"><Dot>•</Dot><div>By changing number of arguments</div></Bullet>
                  <Bullet $c="#2b4a7c"><Dot>•</Dot><div>By changing the data type</div></Bullet>
                </Slide>
              </SlideArea>
              <Notes>Click to add notes<Ghost>Go to Settings to activate Windows</Ghost></Notes>
            </MainArea>
            <VScroll>
              <ScrollThumb />
              <ScrollGlyph $mb={7}>▾</ScrollGlyph>
              <ScrollGlyph><MdKeyboardDoubleArrowUp /></ScrollGlyph>
              <ScrollGlyph><MdKeyboardDoubleArrowDown /></ScrollGlyph>
            </VScroll>
          </PptBody>

          <PptStatus>
            <StatusText $mr={11}>Slide 14 of 18</StatusText>
            <StatusText $mr={12}>"Office Theme"</StatusText>
            <StatusText $mr={11}><MdSpellcheck /></StatusText>
            <StatusText $mr={0}>English (India)</StatusText>
            <StatusEnd>
              <MdCalendarViewMonth /><MdViewModule /><MdViewQuilt />
              <StatusZoom>73%</StatusZoom>
              <MdRemoveCircleOutline />
              <ZoomTrack />
              <MdAddCircleOutline />
              <MdFitScreen />
            </StatusEnd>
          </PptStatus>
        </Ppt>

        <Sidebar>
          <SideIcon><WindowsLogo size={11} /></SideIcon>
          <SideIcon><CortanaRing size={10} width={1.8} /></SideIcon>
          <SideIcon $mb={3}><TaskViewIcon size={13} color="#ccc" /></SideIcon>
          <SideIcon $mb={4}><CmdIcon w={14} h={11} /></SideIcon>
          <SideIcon $mb={4}><NotepadIcon size={15} /></SideIcon>
          <SideIcon><PptIcon /></SideIcon>
          <OpenTick $top={79} /><OpenTick $top={108} /><OpenTick $top={137} />
          <SideScroll>
            <MdKeyboardArrowLeft />
            <SideScrollThumb />
            <MdKeyboardArrowRight />
          </SideScroll>
          <SideIcon $mt={6}><MdOutlinePeopleAlt size={11} /></SideIcon>
          <SideBack><MdKeyboardArrowLeft /></SideBack>
          <SideEng>ENG</SideEng>
          <SideClock>11:42<br />Wednesday<br />05-05-2021</SideClock>
          <SideIcon $mt={2}><MdOutlineMessage size={11} /></SideIcon>
        </Sidebar>

        <Pill>
          <PillIcon><MdMicOff /></PillIcon>
          <PillIcon $dim><MdVolumeOff /></PillIcon>
          <PillIcon $dim><MdOutlineRemoveCircleOutline /></PillIcon>
        </Pill>
        <Pointer width="9" height="13" viewBox="0 0 9 13">
          <path d="M1 1v10l2.500-2 2 3.500 1.500-1-2-3.500h3z" fill="#fff" stroke="#333" strokeWidth="0.8" />
        </Pointer>
        <ShareBar>
          <ShareGrip>||</ShareGrip>
          meet.google.com is sharing your screen.
          <StopButton>Stop sharing</StopButton>
          <HideLink>Hide</HideLink>
        </ShareBar>
      </Stage>

      <Footer>
        <Details>Meeting details <MdExpandLess size={26} color="#5f6368" /></Details>
        <CallButtons>
          <CallButton><MdMicOff /></CallButton>
          <CallButton $light><MdCallEnd /></CallButton>
          <CallButton><MdVideocamOff /></CallButton>
        </CallButtons>
        <FooterAction $w={110} $ml={111}>
          <FooterGlyph><MdOutlinePanTool /></FooterGlyph>
          Raise hand
        </FooterAction>
        <FooterAction $w={130} $ml={46}>
          <FooterGlyph><MdOutlineClosedCaption /></FooterGlyph>
          Turn on captions
        </FooterAction>
        <FooterAction $w={130} $ml={44} $pb={2}>
          <FooterGlyph><PresentIcon /></FooterGlyph>
          Lakshmana Rao V<br />is presenting
        </FooterAction>
        <FooterMore><MdMoreVert /></FooterMore>
      </Footer>

      <Taskbar>
        <StartButton><WindowsLogo /></StartButton>
        <SearchBox><SearchGlyph />Type here to search</SearchBox>
        <TaskIcon><CortanaRing /></TaskIcon>
        <TaskIcon><TaskViewIcon /></TaskIcon>
        <TaskIcon><StoreIcon /></TaskIcon>
        <TaskIcon><FolderIcon /></TaskIcon>
        <TaskIcon><MailIcon /></TaskIcon>
        <TaskIcon><PcIcon /></TaskIcon>
        <TaskIcon><EdgeIcon /></TaskIcon>
        <TaskIcon $active $open><ChromeIcon /></TaskIcon>
        <TaskIcon $open><WordIcon /></TaskIcon>
        <TaskIcon $open><NotepadIcon /></TaskIcon>
        <TaskIcon $open><CmdIcon /></TaskIcon>
        <Tray>
          <TraySlot><MdKeyboardArrowUp /></TraySlot>
          <TraySlot><MdCloud /></TraySlot>
          <TraySlot><BatteryGlyph /></TraySlot>
          <TraySlot $w={22}><MdMic /></TraySlot>
          <TraySlot $w={28}><MdOutlineWifi /></TraySlot>
          <TraySlot><MdVolumeUp /></TraySlot>
          <TraySlot $w={32} $font={11.7}>ENG</TraySlot>
          <TrayClock>11:42<br />05-05-2021</TrayClock>
          <NotifySlot><MdOutlineMessage /><NotifyCount>2</NotifyCount></NotifySlot>
        </Tray>
      </Taskbar>
    </Page>
  )
}
